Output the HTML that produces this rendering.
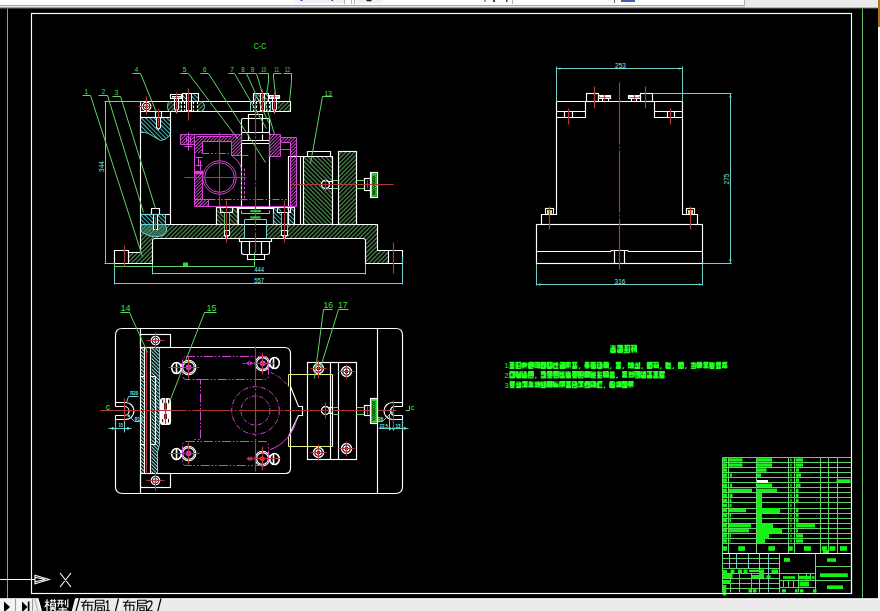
<!DOCTYPE html>
<html>
<head>
<meta charset="utf-8">
<title>CAD</title>
<style>
html,body{margin:0;padding:0;background:#000;overflow:hidden;}
body{width:880px;height:611px;position:relative;font-family:"Liberation Sans",sans-serif;}
svg{position:absolute;left:0;top:0;display:block;}
.w{stroke:#fff;fill:none;stroke-width:1.15}
.r{stroke:#b03a3a;fill:none;stroke-width:1.15}
.g{stroke:#60d466;fill:none;stroke-width:1}
.c{stroke:#74d0cc;fill:none;stroke-width:1}
.m{stroke:#d446d4;fill:none;stroke-width:1}
.y{stroke:#ecec84;fill:none;stroke-width:1}
.gt{fill:#30e830;font-family:"Liberation Sans",sans-serif;}
.ct{fill:#7eeaea;font-family:"Liberation Sans",sans-serif;}
</style>
</head>
<body>
<svg width="880" height="611" viewBox="0 0 880 611">
<defs>
<pattern id="hg" width="3.05" height="3.05" patternUnits="userSpaceOnUse" patternTransform="rotate(-45)"><line x1="0" y1="1.5" x2="3.05" y2="1.5" stroke="#7ce080" stroke-width="0.75"/></pattern>
<pattern id="hg2" width="3.1" height="3.1" patternUnits="userSpaceOnUse" patternTransform="rotate(45)"><line x1="0" y1="1.5" x2="3.1" y2="1.5" stroke="#7ce080" stroke-width="0.75"/></pattern>
<pattern id="hc" width="3" height="3" patternUnits="userSpaceOnUse" patternTransform="rotate(45)"><line x1="0" y1="1.5" x2="3" y2="1.5" stroke="#48d0d0" stroke-width="0.9"/></pattern>
<pattern id="hc2" width="3" height="3" patternUnits="userSpaceOnUse" patternTransform="rotate(-45)"><line x1="0" y1="1.5" x2="3" y2="1.5" stroke="#48d0d0" stroke-width="0.9"/></pattern>
<pattern id="hcw" width="2.5" height="2.5" patternUnits="userSpaceOnUse" patternTransform="rotate(45)"><line x1="0" y1="1.25" x2="2.5" y2="1.25" stroke="#9af0f0" stroke-width="1"/></pattern>
<pattern id="hm" width="2.4" height="2.4" patternUnits="userSpaceOnUse" patternTransform="rotate(-45)"><line x1="0" y1="1.2" x2="2.4" y2="1.2" stroke="#cc50cc" stroke-width="0.9"/></pattern>
<linearGradient id="topbar" x1="0" y1="0" x2="0" y2="1"><stop offset="0" stop-color="#fff"/><stop offset="0.55" stop-color="#e4e4e4"/><stop offset="0.8" stop-color="#a8a8a8"/><stop offset="1" stop-color="#404040"/></linearGradient>
</defs>

<!-- ===== window chrome ===== -->
<g id="chrome">
<rect x="0" y="0" width="880" height="611" fill="#000"/>
<rect x="0" y="0" width="880" height="5" fill="#fdfdfd"/>
<rect x="0" y="5" width="880" height="1" fill="#a6a6a6"/>
<rect x="0" y="6" width="880" height="1" fill="#e6e6e6"/>
<rect x="0" y="7" width="880" height="1" fill="#a0a0a0"/>
<rect x="0" y="8" width="880" height="1" fill="#3c3c3c"/>
<rect x="745" y="0" width="133" height="7" fill="#ebebeb"/><rect x="745" y="7" width="133" height="1" fill="#b8b8b8"/><rect x="744" y="0" width="1" height="5" fill="#b0b0b0"/>
<rect x="295" y="0" width="50" height="3" fill="#eef1f8"/><rect x="344" y="0" width="1" height="4" fill="#b0b0b0"/>
<rect x="300.500" y="0" width="2" height="1" fill="#3048b0"/><rect x="331.500" y="0" width="1.500" height="1" fill="#303030"/>
<rect x="351" y="0" width="1" height="4" fill="#b8b8b8"/><rect x="354" y="0" width="1" height="4" fill="#b8b8b8"/>
<rect x="357" y="0" width="26" height="3" fill="#f0f0f4"/><rect x="366.500" y="0" width="5" height="1.300" fill="#202020"/>
<rect x="484.500" y="0" width="1" height="2" fill="#404040"/><rect x="493" y="0" width="2" height="2" fill="#404040"/><rect x="506" y="0" width="1.500" height="2" fill="#404040"/>
<rect x="512" y="0" width="1" height="4" fill="#b0b0b0"/><rect x="614" y="0" width="1" height="3" fill="#606060"/><rect x="621" y="0" width="14" height="2" fill="#4060b0"/>
<rect x="0" y="598.500" width="880" height="12.500" fill="#ececec"/>
<rect x="878" y="0" width="2" height="611" fill="#fff"/>
<rect x="878" y="0" width="2" height="27" fill="#a87820"/>
</g>

<!-- ===== paper frame ===== -->
<g id="frame">
<line class="g" style="stroke:#69b46e" x1="7.5" y1="8.5" x2="7.5" y2="598.5"/>
<line class="g" style="stroke:#69b46e" x1="862.5" y1="8.5" x2="862.5" y2="598.5"/>
<rect class="w" x="31.5" y="13.5" width="820" height="580"/>
</g>

<!-- main.svg -->
<g id="main">
<!-- hatch fills -->
<path fill="url(#hg)" d="M140.5,224.2H377.8V251H388.5V263.3H365.5V241Q365.5,239 363.5,239H154.4Q152.4,239 152.4,241V263.3H129V252H140.5Z"/>
<rect x="303.5" y="156.6" width="29" height="67.6" fill="url(#hg2)"/>
<rect x="338.5" y="151.3" width="18.3" height="72.9" fill="url(#hg)"/>
<rect x="277.7" y="101.5" width="12.9" height="10" fill="url(#hg)"/>
<path d="M171,101.500H174.500V111.500H171Q167.500,111.500 167.500,106.500Q167.500,101.500 171,101.500Z" fill="url(#hg)"/><rect x="178.500" y="101.500" width="3.500" height="10" fill="url(#hg)"/><path d="M195.700,101.500H200.500Q204,101.500 204,106.500Q204,111.500 200.500,111.500H195.700Z" fill="url(#hg)"/><rect x="182" y="93.500" width="4" height="8" fill="url(#hc)"/><rect x="191" y="93.500" width="7" height="8" fill="url(#hc)"/><rect x="253.500" y="93.500" width="6.500" height="8" fill="url(#hc)"/><rect x="265" y="93.500" width="4" height="8" fill="url(#hc)"/>
<path fill="url(#hc)" d="M140.5,117.3H170.5V135Q166,140.5 160,140L148,133.5Q144,131.5 140.5,132.5Z"/>
<rect x="140.5" y="214.4" width="25.1" height="9.8" fill="url(#hc)"/>
<path fill="url(#hc2)" d="M140.5,224.2H165.6Q168,231 164,235Q155,239 147,235Q142,233 140.5,231Z"/>
<rect x="216.5" y="207.3" width="20.8" height="16.9" fill="url(#hg2)"/>
<rect x="273.6" y="207.3" width="20.9" height="16.9" fill="url(#hc)"/>
<!-- black-outs for holes -->
<rect x="241.5" y="207" width="28.1" height="17.500" fill="#000"/><rect x="244.500" y="224" width="22.400" height="15" fill="#000"/>
<rect x="223.8" y="207.3" width="6" height="32" fill="#000"/>
<rect x="281.2" y="207.3" width="6" height="32" fill="#000"/>
<rect x="182.300" y="101.500" width="15.400" height="10" fill="#000"/><rect x="253.400" y="101.500" width="15.400" height="10" fill="#000"/>
<rect x="174.7" y="98.6" width="3.8" height="13" fill="#000"/>
<rect x="272.7" y="98.6" width="3.9" height="13" fill="#000"/>
<rect x="157" y="117.3" width="4" height="12" fill="#000"/>
<rect x="153.5" y="214.4" width="4.2" height="15" fill="#000"/>
<circle cx="325.3" cy="184.7" r="4.3" fill="#000"/>
<rect x="325" y="181" width="8" height="7.4" fill="#000"/>

<!-- magenta housing hatch -->
<g fill="url(#hm)">
<rect x="181" y="134.3" width="14" height="10.2"/>
<rect x="196" y="136.900" width="36" height="4.400"/>
<rect x="232" y="134.3" width="9.5" height="21.5"/>
<rect x="195" y="140.700" width="7.400" height="12.500"/><rect x="195" y="171" width="7.400" height="36"/>
<rect x="195" y="199.5" width="13" height="7.2"/>
<rect x="290.500" y="142" width="6.500" height="64.700"/>
<rect x="269.5" y="134.3" width="10.5" height="21.7"/>
<rect x="280" y="137.5" width="16.5" height="4.5"/>
</g>

<!-- white outlines -->
<g class="w">
<path d="M140.5,101.5H290.5V111.5H140.5"/>
<path d="M140.5,101.5V251.5"/>
<path d="M170.5,111.5V224.5"/>
<path d="M140.5,117.5H170.5"/>
<path d="M140.5,214.5H170.5"/>
<path d="M165.5,224.5H377.5V250.5H384.5V250.5H402.5V263.5H365.5V240.5Q365.5,239 363.5,238.5H154.5Q152.4,239 152.5,240.5V263.5H114.5V250.5H128.5V252.5H140.5"/>
<path d="M128.5,250.5V263.5M388.5,250.5V263.5"/>
<!-- block 13 and clamp block -->
<path d="M288.5,224.5V156.5H332.5V224.5M300.5,156.5V224.5M303.5,156.5V224.5"/>
<path d="M307.5,156.5V151.5H330.5V156.5"/>
<rect x="338.5" y="151.5" width="18" height="73"/>
<circle cx="325.5" cy="184.5" r="4" stroke-width="1.400"/>
<path d="M328.5,181.5H332.5V188.5H328.5"/>
<rect x="364.5" y="178.5" width="6" height="12"/>
<!-- top nut -->
<rect x="241.5" y="118.5" width="28" height="14" rx="1.5"/>
<path d="M248.5,118.5V114.5H262.5V118.5M248.5,118.5V132.5M262.5,118.5V132.5"/>
<!-- bolt shaft through housing -->
<path d="M241.5,132.5V207.5M269.5,132.5V207.5M241.5,140.5H269.5M241.5,143.5H269.5"/>
<path d="M248.5,134.5V140.5M262.5,134.5V140.5"/>
<!-- bottom nut -->
<path d="M239.5,238.5V241.5H271.5V238.5"/>
<path d="M241.5,241.5V252.5Q241.4,254.1 243.5,254.5H267.5Q269.7,254.1 269.5,252.5V241.5"/>
<path d="M249.5,241.5V254.5M261.5,241.5V254.5"/>
<path d="M247.5,254.5V259.5H264.5V254.5"/>
<!-- support pads under housing -->
<rect x="216.5" y="207.5" width="21" height="17"/>
<rect x="273.5" y="207.5" width="21" height="17"/>
<path d="M237.5,207.5H273.5"/>
<!-- bolts lower -->
<path d="M220.5,207.5H232.5V212.5H220.5ZM224.5,230.5H229.5V235.5H224.5ZM224.5,235.5L226.5,238.5L228.5,235.5"/>
<path d="M277.5,207.5H290.5V212.5H277.5ZM281.5,230.5H287.5V235.5H281.5ZM282.5,235.5L284.5,238.5L286.5,235.5"/>
<path d="M238.5,208.5H273.5M238.5,207.5V224.5"/>
<!-- top bushings + screws -->
<path d="M182.5,101.5V93.5H198.5V101.5M186.5,93.5V110.5H191.5V93.5"/><path d="M181.5,101.5V111.5M184.5,101.5V111.5M193.5,101.5V111.5M197.5,101.5V111.5" stroke-dasharray="2.500,1.500"/>
<path d="M170.5,94.5H181.5V98.5H170.5ZM174.5,98.5V108.5L176.5,112.5L178.5,108.5V98.5"/>
<path d="M253.5,101.5V93.5H268.5V101.5M260.5,93.5V110.5H264.5V93.5"/><path d="M253.5,101.5V111.5M256.5,101.5V111.5M266.5,101.5V111.5M269.5,101.5V111.5" stroke-dasharray="2.500,1.500"/>
<path d="M269.5,95.5H279.5V98.5H269.5ZM272.5,98.5V108.5L274.5,112.5L276.5,108.5V98.5"/>
<!-- column screws -->
<path d="M155.5,111.5V117.5M161.5,111.5V117.5M156.5,117.5V127.5L158.5,129.5L160.5,127.5V117.5"/>
<path d="M151.5,214.5V208.5H159.5V214.5M153.5,214.5V229.5H157.5V214.5"/>
<circle cx="146.5" cy="106.5" r="4.3" stroke-width="1.300"/>
<circle cx="146.5" cy="106.5" r="2.2"/>
</g>
<rect x="172" y="96" width="9" height="1.6" fill="#fff"/>
<rect x="270.5" y="96.3" width="8.5" height="1.6" fill="#fff"/>

<!-- cyan -->
<g class="c">
<path d="M105.5,101.5V263.5M104.5,101.5H140.5M104.5,263.5H114.5"/>
<path d="M114.5,263.5V284.5M402.5,256.5V284.5M114.5,283.5H402.5"/>
<path d="M152.5,263.5V274.5M365.5,263.5V274.5M152.5,273.5H365.5"/>
<path d="M140.5,132.5Q144,131.5 148.5,133.5L160.5,140.5Q166,140.5 170.5,134.5"/>
<path d="M140.5,230.5Q142,233 146.5,234.5Q155,239 164.5,234.5Q168,231 165.5,224.5V214.5H140.5"/>
<path d="M140.5,224.5H165.5"/>
<path d="M170.5,101.5Q167.5,101.5 167.5,106.5Q167.5,111.5 170.5,111.5M200.5,101.5Q204,101.5 204.5,106.5Q204,111.5 200.5,111.5"/>
<path d="M241.5,210.5V213.5H269.5V210.5M244.5,238.5V219.5H266.5V238.5"/>
<path d="M237.5,212.5V224.5M273.5,212.5V224.5"/>
<path d="M250.5,101.5V111.5M270.5,101.5V111.5"/>
</g>

<!-- green leaders etc -->
<g class="g">
<path d="M82.5,95.5H90.5L142.5,256.5"/>
<path d="M98.5,95.5H107.5L143.5,212.5"/>
<path d="M112.5,96.5H120.5L155.5,208.5"/>
<path d="M132.5,73.5H140.5L156.5,112.5"/>
<path d="M180.5,73.5H188.5L237.5,138.5"/>
<path d="M200.5,73.5H208.5L265.5,162.5"/>
<path d="M228.5,73.5H234.5L266.5,128.5"/>
<path d="M238.5,73.5H256.5L274.5,134.5M246.5,73.5L268.5,122.5"/>
<path d="M258.5,73.5H268.5V81.5L266.5,94.5"/>
<path d="M281.5,73.5H273.5V77.5L275.5,94.5"/>
<path d="M283.5,73.5H291.5V81.5L289.5,101.5"/>
<path d="M332.5,96.5H322.5L310.5,163.5"/>
<path d="M114.5,266.5H254.5V252.5"/>
<path d="M114.5,263.5V268.5"/><path d="M224.5,212.5V230.5M229.5,212.5V230.5M281.5,212.5V230.5M287.5,212.5V230.5"/>
<path d="M332.5,180.5H338.5M332.5,188.5H338.5M356.5,180.5H364.5M356.5,188.5H364.5"/>
</g>
<rect x="370.7" y="173.3" width="6" height="23.4" fill="#30e030"/>
<rect x="370.5" y="172.5" width="7" height="25" class="w"/><rect x="370" y="173" width="1.600" height="24" fill="#fff"/>
<path d="M372,175.500l3.500,2.200l-3.500,2.200l3.500,2.200l-3.500,2.200l3.500,2.200l-3.500,2.200l3.500,2.200l-3.500,2.200l3.500,2.200M375.500,175.500l-3.500,2.200l3.500,2.200l-3.500,2.200l3.500,2.200l-3.500,2.200l3.500,2.200l-3.500,2.200l3.500,2.200l-3.500,2.200" stroke="#064006" stroke-width="0.900" fill="none"/>
<rect x="183" y="262.5" width="5" height="3.5" fill="#30e030"/>

<!-- magenta outlines -->
<g class="m">
<path d="M180.5,134.5H241.5M180.5,134.5V144.5H194.5M194.5,134.5V206.5H296.5V137.5H280.5V134.5H269.5"/>
<path d="M202.5,141.5H231.5V155.5H241.5M202.5,141.5V153.5M202.5,170.5V199.5M194.5,199.5H208.5V206.5M196.5,136.5H231.5"/>
<path d="M269.5,134.5V156.5H280.5V142.5H290.5V206.5M280.5,137.5V142.5M280.5,149.5H290.5"/>
<path d="M208.5,199.5H288.5" stroke-dasharray="7,2,1.5,2,1.5,2"/>
<path d="M202.5,153.5H230.5M241.5,155.5H250.5" stroke-dasharray="7,2,1.5,2,1.5,2"/>
<path d="M241.5,134.5V143.5M231.5,155.5A24,24 0 0 1 241.5,168.5"/>
<path d="M188.5,132.5V150.5M184.5,146.5H192.5M186.5,136.5V142.5M190.5,136.5V142.5"/>
<circle cx="219.5" cy="177.5" r="16.7"/>
<circle cx="219.5" cy="177.5" r="14.8"/>
<path d="M195.5,157.5H202.5M198.5,157.5V166.5M195.5,165.5H202.5M200.5,160.5V170.5"/>
<path d="M241.5,170.5V200.5M244.5,168.5V200.5" stroke-dasharray="3,1.5"/>
</g>
<rect x="195.200" y="170.800" width="7.600" height="3.400" fill="#e838e8"/>

<!-- red center lines -->
<g class="r">
<path d="M255.5,94.5V252.5" stroke-dasharray="40,2,2,2"/><path d="M262.5,89.5V112.5"/>
<path d="M184.5,177.5H246.5M219.5,132.5V206.5"/>
<path d="M290.5,184.5H393.5"/>
<path d="M138.5,106.5H152.5M146.5,96.5V114.5"/>
<path d="M188.5,88.5V120.5M176.5,92.5V112.5M274.5,92.5V112.5M158.5,108.5V126.5M155.5,216.5V232.5"/>
<path d="M226.5,200.5V242.5M284.5,200.5V242.5"/>
<path d="M124.5,245.5V266.5M393.5,242.5V273.5"/>
<path d="M325.5,178.5V191.5M367.5,180.5V188.5"/>
</g>

<!-- text -->
<g class="gt" font-size="6.300" text-anchor="middle">
<text x="86.300" y="94">1</text><text x="103.500" y="94">2</text><text x="116.500" y="94.800">3</text>
<text x="136.500" y="72">4</text><text x="184.500" y="72">5</text><text x="204.800" y="72">6</text>
<text x="232" y="72">7</text><text x="243" y="72">8</text><text x="252.600" y="72">9</text>
<text x="263.800" y="72" textLength="5" lengthAdjust="spacingAndGlyphs">10</text><text x="276.600" y="72" textLength="4.500" lengthAdjust="spacingAndGlyphs">11</text><text x="287.600" y="72" textLength="5" lengthAdjust="spacingAndGlyphs">12</text>
<text x="328.200" y="96" font-size="6.500">13</text>
<text x="260" y="48.800" font-size="8.500" textLength="12.500" lengthAdjust="spacingAndGlyphs">C-C</text>
</g>
<g class="ct" font-size="6.500" text-anchor="middle">
<text x="259.200" y="272.400" textLength="10" lengthAdjust="spacingAndGlyphs">444</text>
<text x="259.200" y="282.800" textLength="10" lengthAdjust="spacingAndGlyphs">557</text>
<text transform="translate(104,166.500) rotate(-90)" x="0" y="0">344</text>
</g>
<rect x="250.200" y="210" width="10.800" height="2.200" fill="#30e030" opacity="0.850"/>
<rect x="250.200" y="216.300" width="10.300" height="2.300" fill="#30e030" opacity="0.850"/>
</g>

<!-- plan.svg -->
<g id="plan">
<!-- hatch strips of plate 14 -->
<rect x="141" y="348" width="3" height="125" fill="url(#hcw)"/>
<path d="M151.500,348H159.500V445L157.500,452V473H151.500Z" fill="url(#hcw)"/>
<g class="w">
<path d="M115.5,406.5V335.5Q115.4,328.3 122.5,328.5H395.5Q402.7,328.3 402.5,335.5V406.5M402.5,415.5V486.5Q402.7,493.4 395.5,493.5H122.5Q115.4,493.4 115.5,486.5V415.5"/>
<path d="M140.5,328.5V493.5M377.5,328.5V493.5"/>
<rect x="140.5" y="334.5" width="30" height="13"/>
<rect x="140.5" y="473.5" width="30" height="14"/>
<path d="M170.5,347.5H284.5Q290.4,347.5 290.5,353.5V468.5Q290.4,473.3 285.5,473.5H170.5"/>
<!-- left slot -->
<path d="M115.5,402.5H125.5A8.45,8.45 0 0 1 125.5,419.5H115.5"/>
<path d="M115.5,406.5H124.5A4.35,4.35 0 0 1 124.5,415.5H115.5"/>
<!-- right slot -->
<path d="M402.5,402.5H392.5A8.45,8.45 0 0 0 392.5,419.5H402.5"/>
<path d="M402.5,406.5H393.5A4.6,4.8 0 0 0 393.5,415.5H402.5"/>
<!-- plate 14 -->
<path d="M150.5,376.5H155.5V444.5H150.5M140.5,376.5H144.5M140.5,444.5H144.5M150.5,347.5V473.5M144.5,347.5V473.5"/>
<path d="M140.5,347.5H159.5"/>
<!-- knob 15 plan -->
<rect x="160.5" y="398.5" width="10" height="26" rx="2.500" fill="#fff"/>
<!-- column circles -->
<circle cx="155.5" cy="340.5" r="4.2" stroke-width="1.300"/><circle cx="155.5" cy="340.5" r="2" stroke-width="1.300"/>
<circle cx="155.5" cy="480.5" r="4.2" stroke-width="1.300"/><circle cx="155.5" cy="480.5" r="2" stroke-width="1.300"/>
<!-- bolt circles -->
<circle cx="188.5" cy="367.5" r="7.300"/><circle cx="188.5" cy="367.5" r="5.900"/>
<circle cx="262.5" cy="363.5" r="7.300"/><circle cx="262.5" cy="363.5" r="5.900"/>
<circle cx="188.5" cy="453.5" r="7.300"/><circle cx="188.5" cy="453.5" r="5.900"/>
<circle cx="262.5" cy="458.5" r="7.300"/><circle cx="262.5" cy="458.5" r="5.900"/>
<!-- small knobs next to bolts -->
<path stroke-width="1.600" d="M176.5,362.5A4.8,5.5 0 0 0 176.5,373.5A4.8,5.5 0 0 0 176.5,362.5ZM176.5,362.5V373.5"/>
<path stroke-width="1.600" d="M176.5,448.5A4.8,5.5 0 0 0 176.5,459.5A4.8,5.5 0 0 0 176.5,448.5ZM176.5,448.5V459.5"/>
<path stroke-width="1.600" d="M274.5,357.5A4.8,5.5 0 0 1 274.5,368.5A4.8,5.5 0 0 1 274.5,357.5ZM273.5,357.5V368.5"/>
<path stroke-width="1.600" d="M274.5,453.5A4.8,5.5 0 0 1 274.5,464.5A4.8,5.5 0 0 1 274.5,453.5ZM273.5,453.5V464.5"/>
<!-- V block -->
<path d="M290.5,386.5L298.5,406.5H302.5V415.5H298.5L288.5,436.5"/>
<!-- clamp rect -->
<rect x="307.5" y="362.5" width="49" height="97"/>
<path d="M330.5,362.5V459.5M338.5,362.5V459.5M332.5,374.5V446.5"/>
<circle cx="318.5" cy="368.5" r="5" stroke-width="1.300"/><circle cx="318.5" cy="368.5" r="2.500" stroke-width="1.300"/>
<circle cx="346.5" cy="371.5" r="5" stroke-width="1.300"/><circle cx="346.5" cy="371.5" r="2.500" stroke-width="1.300"/>
<circle cx="318.5" cy="452.5" r="5" stroke-width="1.300"/><circle cx="318.5" cy="452.5" r="2.500" stroke-width="1.300"/>
<circle cx="346.5" cy="448.5" r="5" stroke-width="1.300"/><circle cx="346.5" cy="448.5" r="2.500" stroke-width="1.300"/>
<circle cx="325.5" cy="410.5" r="4" stroke-width="1.300"/>
<path d="M328.5,407.5H332.5V413.5H328.5"/>
<rect x="364.5" y="405.5" width="6" height="10"/>
</g>
<g class="y">
<path d="M288.5,386.5V374.5H332.5M288.5,436.5V446.5H332.5"/>
</g>
<!-- cyan -->
<g class="c">
<path d="M159.5,347.5V444.5L157.5,452.5V473.5"/>
<path d="M108.5,428.5H131.5M115.5,419.5V430.5M124.5,420.5V432.5"/>
<path d="M138.5,396.5H128.5L126.5,402.5"/>
<path d="M142.5,421.5H134.5L128.5,415.5"/>
<path d="M378.5,428.5H408.5M389.5,414.5V430.5M393.5,424.5V430.5M402.5,419.5V430.5"/>
<path d="M377.5,421.5H382.5L391.5,412.5"/>
</g>
<g fill="#50e4e0">
<g font-family="Liberation Sans, sans-serif" font-size="5" font-weight="bold" fill="#6af0ec">
<text x="130.300" y="394.800" textLength="7.800" lengthAdjust="spacingAndGlyphs">R20</text>
<text x="134.800" y="420.700" textLength="7.400" lengthAdjust="spacingAndGlyphs">R12</text>
<text x="118.500" y="426.900" textLength="4.500" lengthAdjust="spacingAndGlyphs">15</text>
<text x="379.500" y="428" textLength="8.500" lengthAdjust="spacingAndGlyphs">22.5</text>
<text x="395.400" y="428" textLength="5" lengthAdjust="spacingAndGlyphs">13</text>
<text x="377.500" y="420.800" textLength="5.600" lengthAdjust="spacingAndGlyphs">R8</text>
</g>
<circle cx="112.700" cy="428.400" r="1.300"/><circle cx="127.900" cy="428.400" r="1.300"/><circle cx="128.700" cy="415.700" r="1.200"/>
<circle cx="389.700" cy="428.400" r="1.300"/><circle cx="393.500" cy="428.400" r="1.300"/><circle cx="404.800" cy="428.400" r="1.300"/><circle cx="391.700" cy="412.800" r="1.200"/>
</g>
<!-- magenta -->
<g class="m">
<rect x="182.5" y="356.5" width="86" height="23" rx="3.500" stroke-dasharray="9,2,1.5,2,1.5,2"/>
<rect x="182.5" y="441.5" width="86" height="24" rx="3.500" stroke-dasharray="9,2,1.5,2,1.5,2"/>
<path d="M196.5,379.5H200.5V439.5H194.5" stroke-dasharray="9,2,1.5,2,1.5,2"/>
<circle cx="255.5" cy="410.5" r="14.500" stroke-dasharray="4,1.500,1,1.500"/>
<circle cx="255.5" cy="410.5" r="23.800" stroke-dasharray="5,1.500,1,1.500"/>
<path d="M270.5,372.5A41,41 0 0 1 288.5,386.5" stroke-dasharray="4,1.500,1,1.500"/>
<path d="M296.5,420.5A42,42 0 0 1 270.5,449.5"/>
<path d="M188.5,360.5V374.5M182.5,367.5H194.5M262.5,356.5V370.5M256.5,363.5H268.5M188.5,446.5V460.5M182.5,453.5H194.5M262.5,452.5V464.5M256.5,458.5H268.5"/>
</g>
<g fill="#e838e8">
<circle cx="188.600" cy="367.300" r="2.800"/><circle cx="262.700" cy="363.300" r="2.800"/><circle cx="188.600" cy="453.500" r="2.800"/>
<path d="M246,363.300L250,360.300V366.300ZM253,363.300L249,360.300V366.300ZM246.500,458.700L250.500,455.700V461.700ZM253.500,458.700L249.500,455.700V461.700Z"/>
</g>
<!-- red -->
<g class="r">
<path d="M100.5,410.5H396.5" stroke-dasharray="40,2,2,2"/>
<path d="M255.5,346.5V471.5" stroke-dasharray="40,2,2,2"/>
<path d="M146.5,347.5V473.5"/>
<path d="M146.5,340.5H164.5M155.5,332.5V350.5M146.5,480.5H164.5M155.5,471.5V490.5"/>
<path d="M168.5,367.5H199.5M188.5,356.5V378.5M242.5,363.5H274.5M262.5,352.5V374.5"/>
<path d="M168.5,453.5H199.5M188.5,442.5V464.5M246.5,458.5H280.5M262.5,446.5V470.5"/>
<path d="M124.5,398.5V421.5M393.5,400.5V428.5"/>
<path d="M310.5,368.5H326.5M318.5,360.5V378.5M338.5,371.5H354.5M346.5,364.5V378.5"/>
<path d="M310.5,452.5H326.5M318.5,444.5V460.5M338.5,448.5H354.5M346.5,441.5V456.5"/>
<path d="M325.5,402.5V418.5M367.5,406.5V414.5"/>
</g>
<circle cx="262.300" cy="458.700" r="2.500" fill="#d83030"/>
<g fill="#200000">
<rect x="162.200" y="399.600" width="1" height="3.400"/><rect x="168" y="399.600" width="1" height="3.400"/>
<rect x="162.200" y="419" width="1" height="3.400"/><rect x="168" y="419" width="1" height="3.400"/>
<rect x="164" y="403" width="3" height="6.500" fill="#701414"/><rect x="164" y="414" width="3" height="5" fill="#701414"/>
</g>
<path d="M165.500,398V424" stroke="#b03a3a" stroke-width="1.100" fill="none"/>
<!-- green -->
<g class="g">
<path d="M120.5,312.5H129.5L147.5,352.5"/>
<path d="M216.5,312.5H204.5L168.5,404.5"/>
<path d="M332.5,309.5H323.5L314.5,378.5"/>
<path d="M348.5,309.5H338.5L320.5,367.5"/>
<path d="M333.5,407.5H338.5M333.5,414.5H338.5M356.5,407.5H364.5M356.5,414.5H364.5"/>
<path d="M405.5,410.5H409.5V405.5"/>
</g>
<rect x="370.400" y="399" width="6.600" height="23.700" fill="#30e030"/>
<rect x="370.5" y="398.5" width="7" height="25" class="w"/>
<path d="M372,401l3.500,2.200l-3.500,2.200l3.500,2.200l-3.500,2.200l3.500,2.200l-3.500,2.200l3.500,2.200l-3.500,2.200l3.500,2.200M375.500,401l-3.500,2.200l3.500,2.200l-3.500,2.200l3.500,2.200l-3.500,2.200l3.500,2.200l-3.500,2.200l3.500,2.200l-3.500,2.200" stroke="#064006" stroke-width="0.900" fill="none"/>
<g class="gt" font-size="9.500" text-anchor="middle" fill="#44e644">
<text x="125.500" y="311.200" textLength="10" lengthAdjust="spacingAndGlyphs">14</text><text x="211.500" y="311.200" textLength="10" lengthAdjust="spacingAndGlyphs">15</text>
<text x="328.200" y="308.400" textLength="9.500" lengthAdjust="spacingAndGlyphs">16</text><text x="342.800" y="308.400" textLength="9.500" lengthAdjust="spacingAndGlyphs">17</text>
</g>
<g class="gt" font-size="6.500" font-weight="bold" fill="#30f030"><text x="105.800" y="410.300" textLength="4.200" lengthAdjust="spacingAndGlyphs">C</text><text x="411" y="410.300" textLength="3.200" lengthAdjust="spacingAndGlyphs" font-size="5.500">C</text></g>
</g>

<!-- front.svg -->
<g id="front">
<g class="w">
<path d="M556.5,101.5H682.5"/>
<path d="M556.5,101.5V214.5H541.5V224.5M682.5,101.5V214.5H697.5V224.5"/>
<path d="M556.5,111.5H585.5M556.5,117.5H585.5V101.5M564.5,111.5V117.5M572.5,111.5V117.5"/>
<path d="M682.5,111.5H654.5M682.5,117.5H654.5V101.5M667.5,111.5V117.5M674.5,111.5V117.5"/>
<rect x="586.5" y="93.5" width="12" height="8"/>
<rect x="640.5" y="93.5" width="12" height="8"/>
<path d="M598.5,95.5H610.5V98.5H598.5ZM602.5,98.5V101.5M608.5,98.5V101.5"/>
<path d="M628.5,95.5H640.5V98.5H628.5ZM631.5,98.5V101.5M636.5,98.5V101.5"/>
<rect x="536.5" y="224.5" width="166" height="39"/>
<path d="M536.5,251.5H610.5L611.5,250.5H627.5L628.5,251.5H702.5M614.5,250.5V263.5M624.5,250.5V263.5"/>
</g>
<rect x="599.500" y="96" width="11" height="1.500" fill="#fff"/><rect x="629" y="96" width="10.500" height="1.500" fill="#fff"/>
<g class="w">
<rect x="545.5" y="208.5" width="8" height="6"/><rect x="686.5" y="208.5" width="8" height="6"/>
</g>
<rect x="547" y="210" width="5" height="4" fill="#e8d070"/><rect x="688" y="210" width="5" height="4" fill="#e8d070"/>
<g class="c">
<path d="M556.5,66.5V101.5M682.5,66.5V101.5M556.5,68.5H682.5"/>
<path d="M652.5,93.5H731.5M730.5,93.5V263.5M702.5,263.5H731.5"/>
<path d="M536.5,263.5V285.5M702.5,263.5V285.5M536.5,284.5H702.5"/>
</g>
<g fill="#40e0e0">
<path d="M556.400,68.600L560.400,67.400V69.800ZM682.400,68.600L678.400,67.400V69.800ZM536.400,284.500L540.400,283.300V285.700ZM702.700,284.500L698.700,283.300V285.700ZM730.400,93.500L729.200,97.500H731.600ZM730.400,263.200L729.200,259.200H731.600Z"/>
</g>
<g class="r">
<path d="M619.5,82.5V269.5" stroke-dasharray="62,2,2,2"/>
<path d="M568.5,108.5V124.5M670.5,108.5V124.5M594.5,86.5V108.5M645.5,86.5V108.5M604.5,94.5V100.5M634.5,94.5V100.5"/>
<path d="M549.5,206.5V229.5M690.5,206.5V229.5"/>
</g>
<g class="ct" font-size="6.500" text-anchor="middle">
<text x="620.500" y="67.500">253</text>
<text x="620" y="283.500">316</text>
<text transform="translate(729,179) rotate(-90)" x="0" y="0">275</text>
</g>
</g>

<!-- notes.svg -->
<g id="notes">
<g fill="#0fd40f" opacity="0.6"><rect x="610.0" y="345.0" width="6.0" height="7.6"/><rect x="616.9" y="345.0" width="6.0" height="7.6"/><rect x="623.8" y="345.0" width="6.0" height="7.6"/><rect x="630.7" y="345.0" width="6.0" height="7.6"/><rect x="509.5" y="362.0" width="5.3" height="6.4"/><rect x="515.8" y="362.0" width="5.3" height="6.4"/><rect x="522.0" y="362.0" width="5.3" height="6.4"/><rect x="528.2" y="362.0" width="5.3" height="6.4"/><rect x="534.5" y="362.0" width="5.3" height="6.4"/><rect x="540.8" y="362.0" width="5.3" height="6.4"/><rect x="547.0" y="362.0" width="5.3" height="6.4"/><rect x="553.2" y="362.0" width="5.3" height="6.4"/><rect x="559.5" y="362.0" width="5.3" height="6.4"/><rect x="565.8" y="362.0" width="5.3" height="6.4"/><rect x="572.0" y="362.0" width="5.3" height="6.4"/><rect x="584.5" y="362.0" width="5.3" height="6.4"/><rect x="590.8" y="362.0" width="5.3" height="6.4"/><rect x="597.0" y="362.0" width="5.3" height="6.4"/><rect x="603.2" y="362.0" width="5.3" height="6.4"/><rect x="615.8" y="362.0" width="5.3" height="6.4"/><rect x="628.2" y="362.0" width="5.3" height="6.4"/><rect x="634.5" y="362.0" width="5.3" height="6.4"/><rect x="647.0" y="362.0" width="5.3" height="6.4"/><rect x="653.2" y="362.0" width="5.3" height="6.4"/><rect x="665.8" y="362.0" width="5.3" height="6.4"/><rect x="678.2" y="362.0" width="5.3" height="6.4"/><rect x="690.8" y="362.0" width="5.3" height="6.4"/><rect x="697.0" y="362.0" width="5.3" height="6.4"/><rect x="703.2" y="362.0" width="5.3" height="6.4"/><rect x="709.5" y="362.0" width="5.3" height="6.4"/><rect x="715.8" y="362.0" width="5.3" height="6.4"/><rect x="722.0" y="362.0" width="5.3" height="6.4"/><rect x="509.5" y="371.2" width="5.3" height="6.6"/><rect x="515.8" y="371.2" width="5.3" height="6.6"/><rect x="522.0" y="371.2" width="5.3" height="6.6"/><rect x="528.2" y="371.2" width="5.3" height="6.6"/><rect x="540.8" y="371.2" width="5.3" height="6.6"/><rect x="547.0" y="371.2" width="5.3" height="6.6"/><rect x="553.2" y="371.2" width="5.3" height="6.6"/><rect x="559.5" y="371.2" width="5.3" height="6.6"/><rect x="565.8" y="371.2" width="5.3" height="6.6"/><rect x="572.0" y="371.2" width="5.3" height="6.6"/><rect x="578.2" y="371.2" width="5.3" height="6.6"/><rect x="584.5" y="371.2" width="5.3" height="6.6"/><rect x="590.8" y="371.2" width="5.3" height="6.6"/><rect x="597.0" y="371.2" width="5.3" height="6.6"/><rect x="603.2" y="371.2" width="5.3" height="6.6"/><rect x="609.5" y="371.2" width="5.3" height="6.6"/><rect x="622.0" y="371.2" width="5.3" height="6.6"/><rect x="628.2" y="371.2" width="5.3" height="6.6"/><rect x="634.5" y="371.2" width="5.3" height="6.6"/><rect x="640.8" y="371.2" width="5.3" height="6.6"/><rect x="647.0" y="371.2" width="5.3" height="6.6"/><rect x="653.2" y="371.2" width="5.3" height="6.6"/><rect x="659.5" y="371.2" width="5.3" height="6.6"/><rect x="509.5" y="381.2" width="5.3" height="6.4"/><rect x="515.8" y="381.2" width="5.3" height="6.4"/><rect x="522.0" y="381.2" width="5.3" height="6.4"/><rect x="528.2" y="381.2" width="5.3" height="6.4"/><rect x="534.5" y="381.2" width="5.3" height="6.4"/><rect x="540.8" y="381.2" width="5.3" height="6.4"/><rect x="547.0" y="381.2" width="5.3" height="6.4"/><rect x="553.2" y="381.2" width="5.3" height="6.4"/><rect x="559.5" y="381.2" width="5.3" height="6.4"/><rect x="565.8" y="381.2" width="5.3" height="6.4"/><rect x="572.0" y="381.2" width="5.3" height="6.4"/><rect x="578.2" y="381.2" width="5.3" height="6.4"/><rect x="584.5" y="381.2" width="5.3" height="6.4"/><rect x="590.8" y="381.2" width="5.3" height="6.4"/><rect x="597.0" y="381.2" width="5.3" height="6.4"/><rect x="609.5" y="381.2" width="5.3" height="6.4"/><rect x="615.8" y="381.2" width="5.3" height="6.4"/><rect x="622.0" y="381.2" width="5.3" height="6.4"/><rect x="628.2" y="381.2" width="5.3" height="6.4"/></g>
<path fill="none" stroke="#22ff22" stroke-width="1.3" d="M610.6,348.4H615.4M610.0,349.9H616.0M610.0,351.5H616.0M610.6,352.6H615.4M613.0,345.0V351.5M614.2,346.1V352.6M617.5,345.4H622.3M617.5,346.9H622.3M616.9,349.9H622.3M616.9,351.5H622.3M617.5,352.6H622.3M619.9,345.0V352.6M621.1,345.0V352.6M622.6,345.0V352.6M624.4,345.4H629.8M623.8,349.9H629.8M623.8,352.6H629.8M625.6,345.0V351.5M626.8,345.0V352.6M629.5,345.0V352.6M630.7,345.4H636.7M630.7,348.4H636.1M630.7,349.9H636.1M632.5,345.0V352.6M634.9,346.1V351.5M636.4,346.1V352.6"/>
<path fill="none" stroke="#22ff22" stroke-width="1.25" d="M509.5,362.3H514.3M509.5,364.9H514.3M510.0,367.4H514.3M509.5,368.4H514.3M511.1,363.0V367.4M512.2,362.0V368.4M513.2,362.0V368.4M515.8,362.3H521.1M515.8,366.2H520.6M515.8,368.4H521.1M516.0,362.0V368.4M517.4,363.0V368.4M520.8,362.0V367.4M522.0,363.6H527.4M522.0,364.9H527.4M522.0,366.2H526.8M522.3,363.0V368.4M523.6,362.0V367.4M528.8,362.3H533.1M528.2,363.6H533.1M528.8,364.9H533.1M528.2,366.2H533.1M528.8,368.4H533.1M528.5,363.0V368.4M529.9,362.0V368.4M530.9,362.0V368.4M533.3,362.0V367.4M534.5,362.3H539.9M535.0,364.9H539.9M534.5,367.4H539.9M534.8,363.0V367.4M537.2,362.0V367.4M538.2,362.0V368.4M539.6,363.0V368.4M540.8,362.3H546.1M540.8,363.6H546.1M540.8,364.9H545.6M540.8,367.4H545.6M540.8,368.4H546.1M541.0,362.0V368.4M542.4,362.0V368.4M544.5,363.0V368.4M545.8,363.0V368.4M547.0,362.3H552.4M547.5,367.4H552.4M547.0,368.4H551.8M547.3,362.0V367.4M548.6,362.0V367.4M550.7,362.0V368.4M552.1,362.0V368.4M553.2,363.6H558.1M553.8,364.9H558.6M553.2,368.4H558.6M553.5,363.0V368.4M557.0,362.0V368.4M560.0,362.3H564.3M559.5,364.9H564.9M560.0,366.2H564.9M559.5,367.4H564.9M560.0,368.4H564.9M562.2,362.0V368.4M563.2,363.0V367.4M564.6,362.0V368.4M566.3,362.3H570.6M565.8,363.6H571.1M566.3,366.2H571.1M566.0,362.0V368.4M567.4,363.0V367.4M568.4,363.0V367.4M572.0,362.3H577.4M572.5,366.2H577.4M572.0,367.4H577.4M572.0,368.4H576.8M573.6,363.0V368.4M575.7,362.0V367.4M580.0,367.4l-1,1.6M585.0,362.3H589.3M584.5,364.9H589.3M584.5,366.2H589.9M586.1,362.0V368.4M587.2,363.0V368.4M588.2,363.0V368.4M590.8,362.3H596.1M590.8,364.9H596.1M591.3,366.2H596.1M591.3,367.4H596.1M590.8,368.4H596.1M591.0,362.0V367.4M592.4,362.0V367.4M593.4,362.0V367.4M594.5,363.0V367.4M597.5,362.3H601.8M597.0,364.9H602.4M597.0,367.4H601.8M597.5,368.4H601.8M597.3,362.0V368.4M600.7,362.0V368.4M602.1,363.0V368.4M603.2,362.3H608.6M603.8,363.6H608.6M603.2,364.9H608.6M603.2,366.2H608.1M603.8,367.4H608.1M604.9,362.0V368.4M605.9,362.0V367.4M608.3,363.0V368.4M611.3,367.4l-1,1.6M615.8,362.3H621.1M615.8,363.6H621.1M616.3,366.2H620.6M615.8,367.4H621.1M615.8,368.4H620.6M617.4,362.0V367.4M618.4,362.0V367.4M619.5,362.0V367.4M623.8,367.4l-1,1.6M628.2,363.6H633.1M628.8,364.9H633.6M628.8,367.4H633.6M628.5,362.0V368.4M630.9,363.0V368.4M632.0,362.0V368.4M633.3,363.0V368.4M634.5,364.9H639.9M634.5,367.4H639.9M634.5,368.4H639.9M637.2,363.0V368.4M639.6,362.0V368.4M642.5,367.4l-1,1.6M647.0,362.3H652.4M647.0,363.6H652.4M647.0,364.9H652.4M647.5,367.4H651.8M647.0,368.4H651.8M647.3,362.0V368.4M648.6,362.0V367.4M649.7,362.0V368.4M652.1,362.0V368.4M653.2,362.3H658.6M653.8,364.9H658.1M653.2,366.2H658.1M653.8,367.4H658.1M654.9,362.0V367.4M658.3,363.0V368.4M661.3,367.4l-1,1.6M665.8,363.6H670.6M665.8,364.9H671.1M666.3,367.4H670.6M666.3,368.4H671.1M666.0,362.0V368.4M667.4,362.0V368.4M669.5,363.0V367.4M673.8,367.4l-1,1.6M678.8,362.3H683.6M678.8,363.6H683.1M678.2,364.9H683.6M678.8,367.4H683.6M678.2,368.4H683.6M678.5,362.0V367.4M679.9,362.0V367.4M680.9,363.0V367.4M683.3,362.0V368.4M686.3,367.4l-1,1.6M690.8,363.6H696.1M691.3,366.2H696.1M690.8,368.4H695.6M693.4,362.0V367.4M695.8,363.0V368.4M697.0,362.3H701.8M697.0,363.6H702.4M697.5,364.9H702.4M697.5,366.2H702.4M697.0,367.4H701.8M697.3,362.0V367.4M698.6,362.0V368.4M703.8,362.3H708.6M703.2,363.6H708.1M703.2,367.4H708.6M704.9,362.0V368.4M705.9,362.0V367.4M707.0,363.0V368.4M709.5,363.6H714.9M710.0,366.2H714.9M709.5,368.4H714.3M709.8,362.0V367.4M711.1,363.0V368.4M712.2,362.0V368.4M713.2,363.0V367.4M716.3,362.3H721.1M715.8,363.6H721.1M715.8,364.9H721.1M716.3,367.4H721.1M715.8,368.4H721.1M717.4,363.0V367.4M719.5,362.0V368.4M722.5,362.3H727.4M722.0,363.6H726.8M722.0,366.2H727.4M722.0,367.4H727.4M723.6,363.0V367.4M725.7,362.0V368.4M510.0,371.5H514.3M509.5,372.8H514.9M509.5,376.8H514.9M509.5,377.8H514.9M509.8,372.2V377.8M513.2,371.2V376.8M514.6,371.2V377.8M516.3,374.2H520.6M516.3,375.5H521.1M516.3,376.8H520.6M516.3,377.8H521.1M516.0,371.2V376.8M517.4,371.2V377.8M519.5,372.2V377.8M520.8,371.2V377.8M522.0,374.2H527.4M522.5,375.5H527.4M522.0,376.8H527.4M522.0,377.8H527.4M522.3,371.2V377.8M524.7,371.2V377.8M525.7,371.2V377.8M528.2,371.5H533.6M528.8,372.8H533.6M528.2,374.2H533.1M528.2,375.5H533.6M528.2,377.8H533.6M528.5,372.2V377.8M533.3,371.2V376.8M536.3,376.8l-1,1.6M540.8,371.5H545.6M540.8,372.8H545.6M540.8,374.2H546.1M540.8,376.8H545.6M540.8,377.8H546.1M544.5,372.2V377.8M545.8,372.2V377.8M547.0,371.5H552.4M547.0,372.8H552.4M547.0,374.2H552.4M547.5,375.5H552.4M547.0,377.8H552.4M548.6,371.2V376.8M549.7,371.2V377.8M550.7,372.2V376.8M552.1,372.2V376.8M553.2,371.5H558.6M553.2,372.8H558.1M553.2,374.2H558.6M553.2,375.5H558.1M553.2,377.8H558.6M554.9,372.2V377.8M558.3,371.2V377.8M560.0,372.8H564.3M559.5,374.2H564.3M559.5,376.8H564.9M559.5,377.8H564.9M559.8,371.2V376.8M562.2,372.2V377.8M563.2,371.2V377.8M566.3,372.8H570.6M565.8,374.2H571.1M565.8,375.5H571.1M565.8,376.8H571.1M566.3,377.8H571.1M566.0,371.2V377.8M568.4,371.2V377.8M569.5,372.2V376.8M572.0,371.5H577.4M572.5,372.8H577.4M572.0,374.2H577.4M572.0,375.5H577.4M572.5,377.8H577.4M573.6,371.2V377.8M574.7,371.2V377.8M575.7,372.2V377.8M577.1,371.2V376.8M578.2,371.5H583.6M578.2,374.2H583.1M578.8,375.5H583.6M578.2,377.8H583.6M578.5,371.2V377.8M579.9,371.2V376.8M580.9,372.2V376.8M583.3,372.2V376.8M585.0,371.5H589.3M584.5,372.8H589.3M584.5,374.2H589.9M584.5,375.5H589.9M584.5,376.8H589.3M584.8,371.2V377.8M586.1,371.2V377.8M587.2,372.2V377.8M589.6,371.2V377.8M590.8,372.8H596.1M591.3,374.2H595.6M591.3,375.5H596.1M590.8,377.8H596.1M591.0,371.2V377.8M592.4,372.2V376.8M593.4,372.2V377.8M594.5,372.2V376.8M597.0,372.8H602.4M597.0,375.5H602.4M597.0,377.8H602.4M598.6,371.2V377.8M599.7,372.2V377.8M603.2,371.5H608.6M603.8,374.2H608.1M603.2,375.5H608.1M603.2,376.8H608.1M603.5,371.2V376.8M604.9,371.2V376.8M607.0,372.2V376.8M608.3,372.2V377.8M609.5,372.8H614.9M609.5,375.5H614.3M609.5,376.8H614.9M610.0,377.8H614.9M611.1,371.2V377.8M612.2,372.2V376.8M613.2,371.2V376.8M617.5,376.8l-1,1.6M622.5,371.5H627.4M622.0,372.8H626.8M622.5,375.5H626.8M622.0,376.8H627.4M623.6,371.2V377.8M624.7,371.2V377.8M625.7,371.2V377.8M628.8,372.8H633.6M628.8,374.2H633.6M628.8,376.8H633.6M629.9,371.2V376.8M633.3,371.2V376.8M634.5,371.5H639.9M634.5,374.2H639.3M635.0,377.8H639.9M634.8,371.2V376.8M637.2,372.2V376.8M638.2,371.2V376.8M639.6,371.2V377.8M640.8,372.8H646.1M640.8,375.5H645.6M641.3,376.8H646.1M640.8,377.8H646.1M641.0,371.2V377.8M643.4,371.2V377.8M644.5,371.2V377.8M645.8,371.2V377.8M647.0,371.5H652.4M647.0,375.5H652.4M647.0,376.8H652.4M647.0,377.8H652.4M649.7,372.2V377.8M650.7,371.2V377.8M653.2,371.5H658.6M653.8,374.2H658.1M653.2,376.8H658.6M653.2,377.8H658.6M654.9,371.2V376.8M655.9,371.2V377.8M657.0,371.2V376.8M659.5,371.5H664.9M660.0,372.8H664.9M659.5,375.5H664.3M659.5,376.8H664.3M659.5,377.8H664.3M659.8,371.2V377.8M661.1,371.2V377.8M663.2,371.2V376.8M510.0,381.5H514.9M510.0,382.8H514.9M509.5,384.1H514.3M510.0,385.4H514.9M510.0,387.6H514.3M511.1,381.2V387.6M512.2,381.2V386.6M513.2,382.2V387.6M515.8,384.1H521.1M516.3,386.6H520.6M515.8,387.6H521.1M517.4,382.2V387.6M519.5,382.2V386.6M520.8,382.2V387.6M522.5,381.5H527.4M522.0,382.8H526.8M522.0,386.6H526.8M524.7,381.2V387.6M525.7,381.2V387.6M527.1,381.2V387.6M528.8,382.8H533.6M528.8,385.4H533.6M528.2,386.6H533.6M529.9,381.2V386.6M530.9,381.2V387.6M532.0,382.2V387.6M534.5,382.8H539.9M535.0,384.1H539.3M534.5,386.6H539.3M536.1,382.2V387.6M538.2,381.2V387.6M539.6,382.2V387.6M540.8,382.8H545.6M540.8,385.4H546.1M540.8,387.6H545.6M541.0,381.2V386.6M542.4,382.2V387.6M544.5,381.2V387.6M545.8,381.2V387.6M547.0,381.5H552.4M547.0,382.8H552.4M547.5,384.1H552.4M547.0,385.4H552.4M547.0,386.6H552.4M547.3,382.2V387.6M549.7,382.2V387.6M550.7,381.2V387.6M552.1,381.2V387.6M553.8,384.1H558.6M553.8,385.4H558.6M553.2,386.6H558.6M553.5,381.2V386.6M554.9,382.2V387.6M560.0,381.5H564.9M560.0,382.8H564.9M559.5,385.4H564.3M559.8,381.2V387.6M562.2,382.2V387.6M563.2,382.2V386.6M564.6,381.2V386.6M565.8,381.5H571.1M565.8,382.8H570.6M565.8,385.4H570.6M565.8,386.6H571.1M565.8,387.6H571.1M567.4,382.2V386.6M568.4,381.2V387.6M569.5,381.2V387.6M572.0,381.5H576.8M572.0,384.1H577.4M572.5,385.4H576.8M572.0,387.6H577.4M572.3,382.2V387.6M575.7,382.2V386.6M577.1,382.2V387.6M578.2,381.5H583.6M578.2,382.8H583.6M578.2,386.6H583.6M580.9,381.2V386.6M582.0,381.2V386.6M585.0,381.5H589.3M585.0,382.8H589.9M584.5,384.1H589.9M584.5,387.6H589.9M584.8,382.2V386.6M586.1,381.2V386.6M588.2,382.2V387.6M589.6,381.2V387.6M591.3,381.5H595.6M590.8,385.4H596.1M591.3,386.6H596.1M591.0,381.2V387.6M593.4,381.2V386.6M594.5,381.2V387.6M595.8,382.2V387.6M597.5,381.5H602.4M597.5,382.8H602.4M597.0,387.6H602.4M597.3,382.2V387.6M598.6,381.2V387.6M605.0,386.6l-1,1.6M610.0,381.5H614.3M609.5,384.1H614.9M609.5,385.4H614.3M610.0,386.6H614.9M610.0,387.6H614.9M609.8,382.2V387.6M611.1,381.2V387.6M612.2,381.2V386.6M614.6,382.2V387.6M615.8,382.8H620.6M616.3,385.4H620.6M616.3,386.6H621.1M618.4,381.2V386.6M619.5,381.2V386.6M620.8,381.2V387.6M622.0,381.5H627.4M622.0,382.8H626.8M622.5,384.1H627.4M622.5,386.6H627.4M622.5,387.6H627.4M622.3,381.2V387.6M624.7,381.2V386.6M625.7,381.2V387.6M627.1,382.2V387.6M628.2,381.5H633.6M628.2,382.8H633.6M628.2,384.1H633.1M628.2,385.4H633.6M629.9,382.2V387.6M632.0,381.2V386.6"/>
<g class="gt" font-size="7" fill="#30e030"><text x="504.500" y="368.300" textLength="4.500">1.</text><text x="504.500" y="377.800" textLength="4.500">2.</text><text x="504.500" y="387.600" textLength="4.500">3.</text></g>
</g>

<!-- title.svg -->
<g id="title">
<path class="g" stroke="#5cd860" d="M722.5,457.5H851.5M722.5,462.5H851.5M722.5,467.5H851.5M722.5,472.5H851.5M722.5,477.5H851.5M722.5,482.5H851.5M722.5,487.5H851.5M722.5,492.5H851.5M722.5,497.5H851.5M722.5,502.5H851.5M722.5,508.5H851.5M722.5,513.5H851.5M722.5,518.5H851.5M722.5,523.5H851.5M722.5,528.5H851.5M722.5,533.5H851.5M722.5,538.5H851.5M722.5,543.5H851.5M722.5,457.5V553.5M728.5,457.5V553.5M756.5,457.5V553.5M788.5,457.5V553.5M794.5,457.5V553.5M820.5,457.5V553.5M828.5,457.5V553.5M837.5,457.5V553.5"/>
<g fill="#14f414"><rect x="723.0" y="458.2" width="4.0" height="3.5"/><rect x="729.0" y="458.3" width="13.5" height="3.3"/><rect x="757.0" y="458.2" width="15.0" height="3.5"/><rect x="795.5" y="458.3" width="7.5" height="3.3"/><rect x="790.3" y="458.6" width="1.3" height="2.7"/><rect x="723.0" y="463.3" width="4.0" height="3.5"/><rect x="729.0" y="463.4" width="13.5" height="3.3"/><rect x="757.0" y="463.3" width="15.0" height="3.5"/><rect x="795.5" y="463.4" width="7.5" height="3.3"/><rect x="790.3" y="463.7" width="1.3" height="2.7"/><rect x="723.0" y="468.3" width="4.0" height="3.5"/><rect x="757.0" y="468.3" width="9.6" height="3.5"/><rect x="796.0" y="468.4" width="3.0" height="3.3"/><rect x="790.3" y="468.7" width="1.3" height="2.7"/><rect x="723.0" y="473.4" width="4.0" height="3.5"/><rect x="730.0" y="473.5" width="2.0" height="3.3"/><rect x="757.0" y="473.4" width="4.0" height="3.5"/><rect x="796.0" y="473.5" width="5.0" height="3.3"/><rect x="790.3" y="473.8" width="1.3" height="2.7"/><rect x="723.0" y="478.4" width="4.0" height="3.5"/><rect x="796.0" y="478.5" width="3.0" height="3.3"/><rect x="790.3" y="478.8" width="1.3" height="2.7"/><rect x="723.0" y="483.5" width="4.0" height="3.5"/><rect x="730.0" y="483.6" width="2.0" height="3.3"/><rect x="757.0" y="483.5" width="15.0" height="3.5"/><rect x="796.0" y="483.6" width="4.5" height="3.3"/><rect x="790.3" y="483.9" width="1.3" height="2.7"/><rect x="723.0" y="488.6" width="4.0" height="3.5"/><rect x="729.0" y="488.7" width="23.0" height="3.3"/><rect x="757.0" y="488.6" width="20.0" height="3.5"/><rect x="796.0" y="488.7" width="2.5" height="3.3"/><rect x="790.3" y="489.0" width="1.3" height="2.7"/><rect x="723.0" y="493.6" width="4.0" height="3.5"/><rect x="729.5" y="493.7" width="3.0" height="3.3"/><rect x="757.0" y="492.8" width="5.0" height="5.1"/><rect x="796.0" y="493.7" width="2.5" height="3.3"/><rect x="790.3" y="494.0" width="1.3" height="2.7"/><rect x="723.0" y="498.7" width="4.0" height="3.5"/><rect x="729.5" y="498.8" width="2.0" height="3.3"/><rect x="757.0" y="497.9" width="5.0" height="5.1"/><rect x="796.0" y="498.8" width="2.5" height="3.3"/><rect x="790.3" y="499.1" width="1.3" height="2.7"/><rect x="723.0" y="503.7" width="4.0" height="3.5"/><rect x="729.5" y="503.8" width="2.0" height="3.3"/><rect x="757.0" y="502.9" width="5.0" height="5.1"/><rect x="790.3" y="504.1" width="1.3" height="2.7"/><rect x="723.0" y="508.8" width="4.0" height="3.5"/><rect x="729.0" y="508.9" width="17.0" height="3.3"/><rect x="757.0" y="508.0" width="23.0" height="5.1"/><rect x="796.0" y="508.9" width="2.5" height="3.3"/><rect x="790.3" y="509.2" width="1.3" height="2.7"/><rect x="723.0" y="513.9" width="4.0" height="3.5"/><rect x="729.5" y="514.0" width="1.5" height="3.3"/><rect x="757.0" y="513.1" width="5.0" height="5.1"/><rect x="796.0" y="514.0" width="2.5" height="3.3"/><rect x="790.3" y="514.3" width="1.3" height="2.7"/><rect x="723.0" y="518.9" width="4.0" height="3.5"/><rect x="729.5" y="519.0" width="1.5" height="3.3"/><rect x="757.0" y="518.1" width="5.0" height="5.1"/><rect x="796.0" y="519.0" width="2.5" height="3.3"/><rect x="790.3" y="519.3" width="1.3" height="2.7"/><rect x="723.0" y="524.0" width="4.0" height="3.5"/><rect x="729.0" y="524.1" width="22.0" height="3.3"/><rect x="757.0" y="523.2" width="16.0" height="5.1"/><rect x="796.0" y="524.1" width="19.0" height="3.3"/><rect x="790.3" y="524.4" width="1.3" height="2.7"/><rect x="723.0" y="529.0" width="4.0" height="3.5"/><rect x="729.0" y="529.1" width="20.0" height="3.3"/><rect x="757.0" y="528.2" width="25.0" height="5.1"/><rect x="796.0" y="529.1" width="2.0" height="3.3"/><rect x="790.3" y="529.4" width="1.3" height="2.7"/><rect x="723.0" y="534.1" width="4.0" height="3.5"/><rect x="729.5" y="534.2" width="1.5" height="3.3"/><rect x="757.0" y="533.3" width="12.0" height="5.1"/><rect x="796.0" y="534.2" width="7.0" height="3.3"/><rect x="790.3" y="534.5" width="1.3" height="2.7"/><rect x="723.0" y="539.2" width="4.0" height="3.5"/><rect x="729.5" y="539.3" width="1.0" height="3.3"/><rect x="757.0" y="538.4" width="8.0" height="5.1"/><rect x="796.0" y="539.3" width="7.0" height="3.3"/><rect x="790.3" y="539.6" width="1.3" height="2.7"/><rect x="836.5" y="479.3" width="14" height="3.2"/><rect x="722.8" y="546.2" width="4.2" height="4.6"/><rect x="738.2" y="546.2" width="6.8" height="4.6"/><rect x="768.3" y="546.2" width="6.7" height="4.6"/><rect x="789.0" y="546.2" width="3.8" height="4.6"/><rect x="804.0" y="546.2" width="7.0" height="4.6"/><rect x="821.8" y="546.2" width="5.2" height="4.6"/><rect x="829.5" y="546.2" width="6.0" height="4.6"/><rect x="840.0" y="546.2" width="7.0" height="4.6"/><rect x="823" y="550" width="5" height="3"/></g>
<rect x="757" y="480" width="11" height="2.8" fill="#fff"/>
<path class="w" d="M722.5,553.5H851.5"/>
<path class="g" stroke="#5cd860" d="M722.5,558.5H779.5M722.5,563.5H779.5M722.5,568.5H779.5M722.5,573.5H779.5M722.5,578.5H779.5M722.5,583.5H779.5M722.5,588.5H779.5M730.5,573.5V592.5M739.5,573.5V592.5M751.5,573.5V592.5M722.5,553.5V592.5M779.5,573.5H815.5M779.5,580.5H815.5M779.5,587.5H815.5M783.5,580.5V587.5M788.5,580.5V587.5M793.5,580.5V587.5M798.5,573.5V592.5M806.5,573.5V580.5M810.5,573.5V580.5M815.5,566.5H851.5M815.5,580.5H851.5"/>
<path class="c" d="M729.5,553.5V568.5M736.5,553.5V568.5M748.5,553.5V568.5M759.5,553.5V592.5M768.5,553.5V592.5M779.5,553.5V592.5M815.5,553.5V592.5"/>
<g fill="#14f414"><rect x="722.8" y="570.0" width="4.2" height="8.0"/><rect x="730.5" y="569.5" width="4.0" height="3.5"/><rect x="738.0" y="569.5" width="4.0" height="3.5"/><rect x="743.5" y="569.5" width="4.0" height="3.5"/><rect x="749.0" y="569.8" width="10.0" height="2.2"/><rect x="759.0" y="569.5" width="5.0" height="8.5"/><rect x="771.5" y="569.5" width="6.5" height="3.5"/><rect x="723.0" y="580.0" width="8.0" height="3.2"/><rect x="722.8" y="585.0" width="3.5" height="10.5"/><rect x="727.0" y="574.0" width="5.5" height="4.0"/><rect x="751.5" y="575.0" width="7.5" height="3.3"/><rect x="766.5" y="575.3" width="4.0" height="3.0"/><rect x="748.5" y="589.2" width="2.5" height="3.3"/><rect x="753.0" y="589.2" width="3.5" height="3.3"/><rect x="784.0" y="558.0" width="6.0" height="3.8"/><rect x="783.0" y="576.2" width="12.0" height="2.6"/><rect x="798.5" y="575.8" width="12.0" height="3.5"/><rect x="811.5" y="576.2" width="3.0" height="2.6"/><rect x="782.0" y="589.2" width="4.0" height="3.3"/><rect x="795.0" y="589.2" width="2.5" height="3.3"/><rect x="800.0" y="589.2" width="3.5" height="3.3"/><rect x="813.0" y="589.2" width="3.5" height="3.3"/><rect x="827.0" y="558.3" width="9.0" height="3.5"/><rect x="820.0" y="573.3" width="27.8" height="3.7"/><rect x="827.0" y="585.4" width="16.0" height="3.6"/><rect x="799.5" y="581.5" width="9.5" height="5.0"/></g>
<path class="w" d="M722.5,593.5H851.5M851.5,553.5V593.5"/>
</g>

<!-- tabs.svg -->
<g id="ucs" class="w">
<path d="M0,579.500H35M35,575.200L49,579.500L35,583.700ZM35,577.300L45,579.500L35,581.700M60,573L71,587M71,573L60,587"/>
</g>
<g id="tabs">
<rect x="0" y="598.500" width="880" height="12.500" fill="#ebebeb"/>
<rect x="0" y="598.500" width="880" height="1" fill="#fafafa"/>
<!-- nav buttons -->
<rect x="0" y="599" width="15" height="12" fill="#f4f4f4"/>
<rect x="16.500" y="599" width="15.500" height="12" fill="#f4f4f4"/>
<path d="M15.500,599V611M32.500,599V611" stroke="#9a9a9a" stroke-width="1" fill="none"/>
<path d="M4,601.500L10,607L4,612.500Z" fill="#000"/>
<path d="M22,601.500L27.500,607L22,612.500Z" fill="#000"/>
<rect x="27.800" y="601.500" width="1.700" height="10" fill="#000"/>
<!-- active tab -->
<path d="M38,598H76L72.500,611H41.500Z" fill="#000"/>
<path d="M34.500,598L38,611" stroke="#bdbdbd" stroke-width="1.200" fill="none"/>
<path d="M37.800,598.500L41.300,611" stroke="#fff" stroke-width="1.300" fill="none"/>
<path d="M75.800,598.500L72.500,611" stroke="#fff" stroke-width="1.300" fill="none"/>
<!-- 模 -->
<g transform="translate(44.700,599.300)" stroke="#fff" stroke-width="1.150" fill="none">
<path d="M0,3H4.600M2.300,0V12M2.300,4L0,8M2.300,4L4.600,6.500"/>
<path d="M5,1.500H11.500M7,0V3M9.800,0V3M6,4H10.800V8H6ZM6,6H10.800M5,9.600H11.500M8.400,8L5.500,12M8.400,9.600L11.500,12"/>
</g>
<!-- 型 -->
<g transform="translate(57,599.300)" stroke="#fff" stroke-width="1.150" fill="none">
<path d="M0.500,1H6.500M0,4H7M2.400,1Q2.400,5.500 0.800,7.500M4.800,1V7.500M8.400,1V6M10.800,0V7.500L9.600,7"/>
<path d="M1.500,9.600H10M5.800,8V12M0,11.900H11.500"/>
</g>
<!-- tab separators -->
<path d="M79.500,598L76,611" stroke="#000" stroke-width="1.200" fill="none"/>
<path d="M118.500,598.500L115.500,611" stroke="#000" stroke-width="1.200" fill="none"/>
<path d="M121.500,598.500L118.500,611" stroke="#fff" stroke-width="1" fill="none"/>
<path d="M161,598.500L157.800,611" stroke="#000" stroke-width="1.200" fill="none"/>
<!-- 布局1 -->
<g transform="translate(80.800,599.800)" stroke="#000" stroke-width="1.100" fill="none">
<path d="M0,2.500H13M5.500,0L1,7M3,5.500V11M3,5.500H11V10.500L9.800,10M7,3.500V12"/>
</g>
<g transform="translate(94.400,599.800)" stroke="#000" stroke-width="1.100" fill="none">
<path d="M1,0.500H9.500V3.500H1M1,0.500V8L0,12M1,6H10V11.500L8.800,11M3.300,8H7.500V11H3.300Z"/>
</g>
<path d="M106,602.500L107.800,600.800V611M105.700,610.800H110" stroke="#000" stroke-width="1.200" fill="none"/>
<!-- 布局2 -->
<g transform="translate(122.800,599.800)" stroke="#000" stroke-width="1.100" fill="none">
<path d="M0,2.500H13M5.500,0L1,7M3,5.500V11M3,5.500H11V10.500L9.800,10M7,3.500V12"/>
</g>
<g transform="translate(136.600,599.800)" stroke="#000" stroke-width="1.100" fill="none">
<path d="M1,0.500H9.500V3.500H1M1,0.500V8L0,12M1,6H10V11.500L8.800,11M3.300,8H7.500V11H3.300Z"/>
</g>
<path d="M147.300,603Q147.500,600.800 149.800,600.800Q152,600.800 152,603Q152,605 147.200,610.800H152.600" stroke="#000" stroke-width="1.200" fill="none"/>
</g>

</svg>
</body>
</html>
